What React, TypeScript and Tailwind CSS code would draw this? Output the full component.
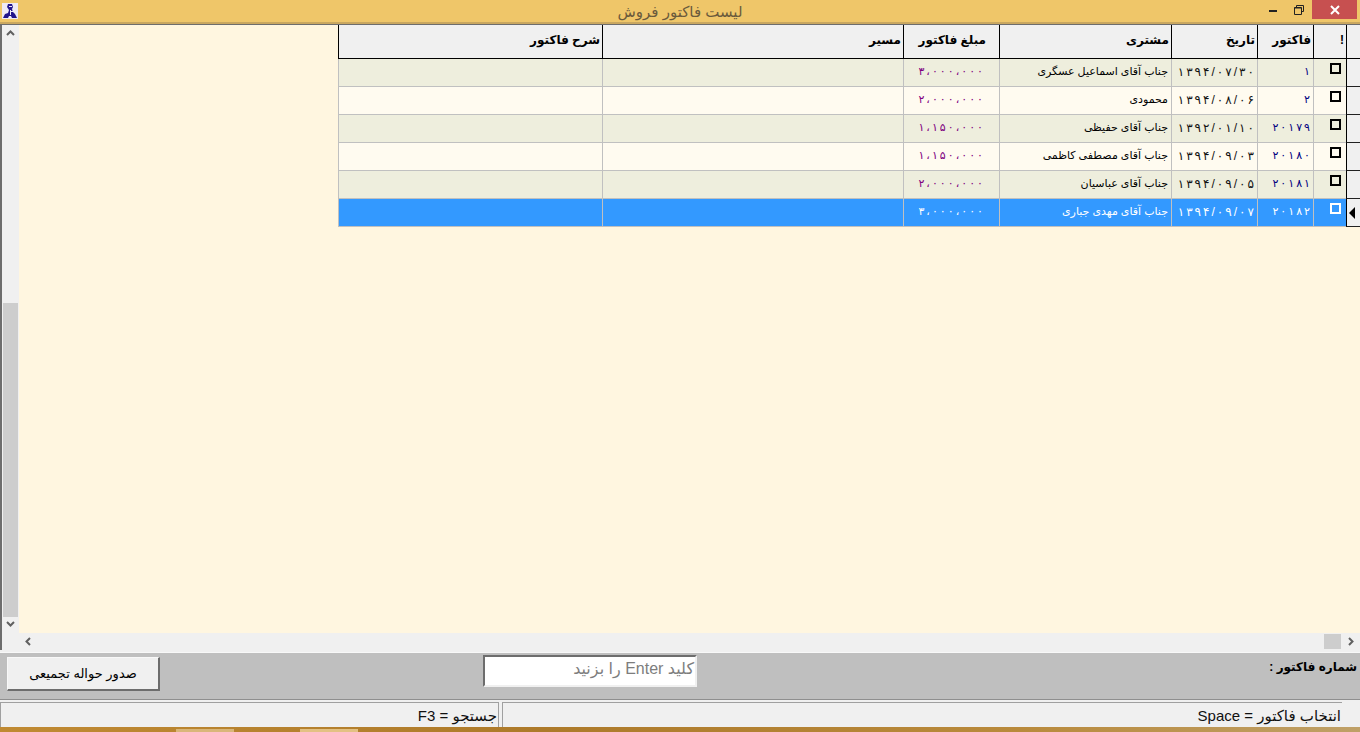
import React from "react";

const rows = [
  { no: "۱", date: "۱۳۹۴/۰۷/۳۰", name: "جناب آقای اسماعیل عسگری", amount: "۳،۰۰۰،۰۰۰" },
  { no: "۲", date: "۱۳۹۴/۰۸/۰۶", name: "محمودی", amount: "۲،۰۰۰،۰۰۰" },
  { no: "۲۰۱۷۹", date: "۱۳۹۲/۰۱/۱۰", name: "جناب آقای حفیظی", amount: "۱،۱۵۰،۰۰۰" },
  { no: "۲۰۱۸۰", date: "۱۳۹۴/۰۹/۰۳", name: "جناب آقای مصطفی کاظمی", amount: "۱،۱۵۰،۰۰۰" },
  { no: "۲۰۱۸۱", date: "۱۳۹۴/۰۹/۰۵", name: "جناب آقای  عباسیان", amount: "۲،۰۰۰،۰۰۰" },
  { no: "۲۰۱۸۲", date: "۱۳۹۴/۰۹/۰۷", name: "جناب آقای مهدی جباری", amount: "۳،۰۰۰،۰۰۰" },
];

const gridCols = "grid grid-cols-[264px_301px_96px_172px_86px_56px_33px_14px]";

const Head = ({ children, className = "" }: { children?: React.ReactNode; className?: string }) => (
  <div dir="rtl" className={`border-l border-black px-[2px] pt-[6px] text-[12px] font-bold leading-[18px] text-black whitespace-nowrap ${className}`}>
    {children}
  </div>
);

const Cell = ({ children, className = "" }: { children?: React.ReactNode; className?: string }) => (
  <div dir="rtl" className={`flex items-center border-l border-[#c0c0c0] pb-[2px] pr-[3px] text-[11px] whitespace-nowrap ${className}`}>
    {children}
  </div>
);

// letter-spacing is ignored on arabic script runs, so digits are spaced one by one
const Digits = ({ text, className = "" }: { text: string; className?: string }) => (
  <span dir="ltr" className={`inline-flex gap-[2px] ${className}`}>
    {Array.from(text).map((ch, i) => (
      <span key={i}>{ch}</span>
    ))}
  </span>
);

const App = () => {
  return (
    <div className="flex h-[732px] w-[1360px] flex-col overflow-hidden bg-[#f0f0f0] font-['Tahoma','Liberation_Sans','DejaVu_Sans',sans-serif]">
      {/* title bar */}
      <div className="relative flex h-[24px] shrink-0 items-start justify-center border-b-2 border-[#c9a760] bg-[#efc669]">
        <svg className="absolute left-[2px] top-[3px]" width="16" height="16" viewBox="0 0 16 16">
          <rect width="16" height="16" fill="#eeeaf6" />
          <path d="M6 1h4l1 3-1 2 1 3 2 2 2 4h-5l-1-2H7l-1 2H1l2-4 3-1 1-3-2-3z" fill="#22148c" />
          <path d="M7 3h3v1H7zM8 7h1v5H8zM9 8h2v1H9z" fill="#eeeaf6" />
        </svg>
        <span dir="rtl" className="pt-[2px] text-[15px] leading-[19px] text-[#6a5a3c]">لیست فاکتور فروش</span>
        <div className="absolute right-[3px] top-0 flex items-start">
          <div className="flex h-[19px] w-[27px] items-center justify-center">
            <div className="mt-[3px] h-[2px] w-[8px] bg-[#222]" />
          </div>
          <div className="flex h-[19px] w-[26px] items-center justify-center">
            <svg width="10" height="10" viewBox="0 0 10 10" fill="none" stroke="#222">
              <path d="M2.5 2.5V.5h7v6h-2M.5 2.5h7v7h-7z" />
              <path d="M.5 3h7" />
            </svg>
          </div>
          <div className="flex h-[19px] w-[45px] items-center justify-center bg-[#c75050]">
            <svg width="10" height="10" viewBox="0 0 10 10" stroke="#fff" strokeWidth="2">
              <path d="M1 1l8 8M9 1l-8 8" />
            </svg>
          </div>
        </div>
      </div>

      {/* body */}
      <div className="flex h-[609px] shrink-0 border-l-2 border-[#6d6d6d] border-t border-t-[#6d6d6d]">
        <div className="flex w-[17px] shrink-0 flex-col items-center bg-[#f0f0f0] pt-[5px]">
          <svg width="9" height="6" viewBox="0 0 9 6" fill="none" stroke="#606060" strokeWidth="2">
            <path d="M1 5l3.5-3.5L8 5" />
          </svg>
          <div className="mt-[267px] h-[314px] w-[15px] bg-[#cdcdcd]" />
          <svg className="mt-[4px]" width="9" height="6" viewBox="0 0 9 6" fill="none" stroke="#606060" strokeWidth="2">
            <path d="M1 1l3.5 3.5L8 1" />
          </svg>
        </div>
        <div className="flex flex-1 justify-end bg-[#fff6e0]">
          <div className="w-[1022px]">
            <div className={`${gridCols} h-[34px] border-b border-black bg-[#f0f0f0]`}>
              <Head>شرح فاکتور</Head>
              <Head>مسیر</Head>
              <Head className="pr-[13px] text-[11px]">مبلغ فاکتور</Head>
              <Head>مشتری</Head>
              <Head>تاریخ</Head>
              <Head>فاکتور</Head>
              <Head>!</Head>
              <div className="border-l border-black" />
            </div>
            {rows.map((row, i) => {
              const selected = i === rows.length - 1;
              const bg = selected ? "bg-[#3399ff]" : i % 2 === 0 ? "bg-[#eeeedd]" : "bg-[#fffbf0]";
              return (
                <div key={row.no} className={`${gridCols} h-[28px]`}>
                  <div className={`col-span-7 grid grid-cols-subgrid border-b border-[#c0c0c0] ${bg}`}>
                    <Cell />
                    <Cell />
                    <Cell className={`pr-[16px] ${selected ? "text-white" : "text-[#800080]"}`}>
                      <Digits text={row.amount} />
                    </Cell>
                    <Cell className={selected ? "text-white" : "text-black"}>{row.name}</Cell>
                    <Cell className={selected ? "text-white" : "text-[#111]"}>
                      <Digits text={row.date} className="text-[12px]" />
                    </Cell>
                    <Cell className={selected ? "text-white" : "text-[#000080]"}>
                      <Digits text={row.no} />
                    </Cell>
                    <div className="flex justify-end border-l border-[#c0c0c0] pr-[5px] pt-[4px]">
                      <div className={`h-[11px] w-[11px] border-2 ${selected ? "border-white" : "border-black"}`} />
                    </div>
                  </div>
                  <div className="flex items-center border-b border-l border-b-[#222] border-l-black bg-[#f0f0f0] pl-[2px]">
                    {selected && (
                      <svg width="6" height="12" viewBox="0 0 6 12">
                        <path d="M6 0v12L0 6z" fill="#000" />
                      </svg>
                    )}
                  </div>
                </div>
              );
            })}
          </div>
        </div>
      </div>

      {/* horizontal scrollbar */}
      <div className="flex h-[17px] shrink-0 items-center border-l-2 border-[#6d6d6d] bg-[#f0f0f0] pl-[23px] pr-[6px]">
        <svg width="6" height="9" viewBox="0 0 6 9" fill="none" stroke="#606060" strokeWidth="2">
          <path d="M5 1L1.5 4.5 5 8" />
        </svg>
        <div className="ml-auto h-[15px] w-[17px] bg-[#cdcdcd]" />
        <svg className="ml-[7px]" width="6" height="9" viewBox="0 0 6 9" fill="none" stroke="#606060" strokeWidth="2">
          <path d="M1 1l3.5 3.5L1 8" />
        </svg>
      </div>

      {/* action panel */}
      <div className="mt-[2px] flex h-[48px] shrink-0 items-start border-b border-t border-[#8f8f8f] border-t-[#f8f8f8] bg-[#bfbfbf] pl-[7px] pt-[4px]">
        <button dir="rtl" className="h-[34px] w-[153px] border border-b-2 border-r-2 border-[#f8f8f8] border-b-[#6d6d6d] border-r-[#6d6d6d] bg-[#f0f0f0] text-[13px] text-black">
          صدور حواله تجمیعی
        </button>
        <div dir="rtl" className="-mt-[2px] ml-[323px] h-[32px] w-[214px] border-2 border-b-[#f0f0f0] border-l-[#6d6d6d] border-r-[#f0f0f0] border-t-[#6d6d6d] bg-white pr-[1px] text-[16px] leading-[24px] text-[#7d7d7d]">
          کلید Enter را بزنید
        </div>
        <div dir="rtl" className="ml-auto pr-[3px] pt-[1px] text-[12px] font-bold leading-[18px] text-black">
          شماره فاکتور :
        </div>
      </div>

      {/* status bar */}
      <div className="flex h-[27px] shrink-0 pt-[2px] text-[15px] leading-[26px] text-[#111]">
        <div dir="rtl" className="w-[499px] border-l border-r border-t border-[#a0a0a0] pr-[1px]">
          جستجو = F3
        </div>
        <div dir="rtl" className="ml-[3px] w-[840px] border-l border-t border-[#a0a0a0] pr-[1px]">
          انتخاب فاکتور = Space
        </div>
      </div>

      {/* desktop strip behind the window */}
      <div className="flex h-[4px] flex-1 items-end bg-[linear-gradient(90deg,#c08a33,#ad7a2a_40%,#b98a3c_75%,#bfa067)] pl-[176px]">
        <div className="h-[3px] w-[58px] bg-[#d9b679]" />
        <div className="ml-[66px] h-[3px] w-[58px] bg-[#e3c183]" />
      </div>
    </div>
  );
};

export default App;
